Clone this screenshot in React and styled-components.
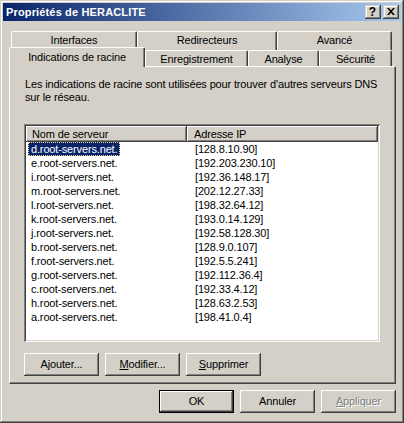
import React from 'react';
import styled, { createGlobalStyle, css } from 'styled-components';

const face = '#D4D0C8';
const shadow = '#808080';
const dark = '#404040';

const Global = createGlobalStyle`
  html, body { margin: 0; padding: 0; background: ${face}; }
  body {
    font-family: "Liberation Sans", Arial, sans-serif;
    font-size: 11px;
    letter-spacing: -0.15px;
    color: #000;
  }
  * { box-sizing: border-box; }
`;

const Window = styled.div`
  width: 404px;
  height: 423px;
  background: ${face};
  padding: 3px;
  display: flex;
  flex-direction: column;
  box-shadow: inset -1px -1px ${dark}, inset 1px 1px ${face},
    inset -2px -2px ${shadow}, inset 2px 2px #fff;
`;

const TitleBar = styled.div`
  height: 18px;
  flex: none;
  display: flex;
  align-items: center;
  padding: 0 2px 0 3px;
  background: linear-gradient(to right, #0a246a, #a6caf0);
`;

const Title = styled.div`
  color: #fff;
  font-weight: bold;
  font-size: 11px;
  letter-spacing: 0.15px;
  line-height: 13px;
`;

const CaptionButtons = styled.div`
  margin-left: auto;
  display: flex;
  gap: 2px;
`;

const CaptionButton = styled.div`
  width: 16px;
  height: 14px;
  background: ${face};
  display: flex;
  align-items: center;
  justify-content: center;
  box-shadow: inset -1px -1px ${dark}, inset 1px 1px ${face},
    inset -2px -2px ${shadow}, inset 2px 2px #fff;
  font-weight: bold;
  font-size: 12px;
  letter-spacing: 0;
  line-height: 12px;
  padding: 0 1px 1px 0;
`;

const Content = styled.div`
  flex: 1;
  display: flex;
  flex-direction: column;
  padding: 10px 5px 7px 6px;
`;

const TabStrip = styled.div`
  display: flex;
  flex-direction: column;
  flex: none;
`;

const TabRow = styled.div`
  display: flex;
  height: ${(p) => p.$h}px;
  padding-left: 2px;
`;

const Tab = styled.div`
  width: ${(p) => p.$w}px;
  height: 100%;
  flex: none;
  background: ${face};
  border-left: 1px solid #fff;
  border-top: 1px solid #fff;
  border-right: 1px solid ${dark};
  border-radius: 2px 2px 0 0;
  box-shadow: inset -1px 0 ${shadow};
  display: flex;
  justify-content: center;
  align-items: flex-start;
  padding-top: 2px;
  line-height: 13px;
  white-space: nowrap;
  ${(p) =>
    p.$selected &&
    css`
      position: relative;
      z-index: 1;
      width: ${p.$w + 2}px;
      margin-left: -2px;
      margin-top: -3px;
      height: calc(100% + 4px);
      padding-top: 3px;
    `}
`;

const Panel = styled.div`
  flex: 1;
  display: flex;
  flex-direction: column;
  align-items: flex-start;
  background: ${face};
  border-top: 1px solid #fff;
  border-left: 1px solid #fff;
  border-right: 1px solid ${dark};
  border-bottom: 1px solid ${dark};
  box-shadow: inset -1px -1px ${shadow};
  padding: 11px 14px 0 14px;
`;

const Description = styled.p`
  margin: 0;
  padding-left: 1px;
  line-height: 13px;
  width: 362px;
`;

const ListBox = styled.div`
  margin-top: 20px;
  width: 356px;
  height: 218px;
  background: #fff;
  padding: 2px;
  display: flex;
  flex-direction: column;
  box-shadow: inset 1px 1px ${shadow}, inset -1px -1px #fff,
    inset 2px 2px ${dark}, inset -2px -2px ${face};
  overflow: hidden;
`;

const Header = styled.div`
  display: flex;
  height: 16px;
  flex: none;
`;

const HeaderCell = styled.div`
  ${(p) => (p.$w ? `width: ${p.$w}px; flex: none;` : 'flex: 1;')}
  height: 100%;
  background: ${face};
  display: flex;
  align-items: center;
  padding-left: ${(p) => p.$pl}px;
  line-height: 13px;
  box-shadow: inset -1px -1px ${dark}, inset 1px 1px #fff,
    inset -2px -2px ${shadow};
`;

const Row = styled.div`
  display: flex;
  height: 14px;
  line-height: 14px;
  flex: none;
`;

const Cell = styled.div`
  ${(p) => (p.$w ? `width: ${p.$w}px; flex: none;` : 'flex: 1;')}
  padding-left: ${(p) => p.$pl}px;
  white-space: nowrap;
`;

const Label = styled.span`
  display: inline-block;
  height: 14px;
  padding: 0 3px 0 3px;
  ${(p) =>
    p.$selected &&
    css`
      background: #0a246a;
      color: #fff;
      outline: 1px dotted #f5db95;
      outline-offset: -1px;
    `}
`;

const ButtonRow = styled.div`
  display: flex;
  gap: 6px;
  margin-top: ${(p) => p.$mt}px;
  flex: none;
  ${(p) => p.$end && 'justify-content: flex-end; align-self: stretch;'}
`;

const Button = styled.button`
  width: 75px;
  height: 23px;
  margin: 0;
  padding: 0;
  border: none;
  border-radius: 0;
  background: ${face};
  font-family: "Liberation Sans", Arial, sans-serif;
  font-size: 11px;
  letter-spacing: -0.15px;
  line-height: 13px;
  color: #000;
  box-shadow: inset -1px -1px ${dark}, inset 1px 1px #fff,
    inset -2px -2px ${shadow}, inset 2px 2px ${face};
  ${(p) =>
    p.$default &&
    css`
      box-shadow: inset 0 0 0 1px #000, inset -2px -2px ${dark},
        inset 2px 2px #fff, inset -3px -3px ${shadow};
    `}
  ${(p) =>
    p.disabled &&
    css`
      color: ${shadow};
      text-shadow: 1px 1px #fff;
    `}
`;

const servers = [
  ['d.root-servers.net.', '[128.8.10.90]'],
  ['e.root-servers.net.', '[192.203.230.10]'],
  ['i.root-servers.net.', '[192.36.148.17]'],
  ['m.root-servers.net.', '[202.12.27.33]'],
  ['l.root-servers.net.', '[198.32.64.12]'],
  ['k.root-servers.net.', '[193.0.14.129]'],
  ['j.root-servers.net.', '[192.58.128.30]'],
  ['b.root-servers.net.', '[128.9.0.107]'],
  ['f.root-servers.net.', '[192.5.5.241]'],
  ['g.root-servers.net.', '[192.112.36.4]'],
  ['c.root-servers.net.', '[192.33.4.12]'],
  ['h.root-servers.net.', '[128.63.2.53]'],
  ['a.root-servers.net.', '[198.41.0.4]'],
];

const backTabs = [
  ['Interfaces', 126],
  ['Redirecteurs', 140],
  ['Avancé', 115],
];
const frontTabs = [
  ['Indications de racine', 134, true],
  ['Enregistrement', 103],
  ['Analyse', 71],
  ['Sécurité', 73],
];

export default function App() {
  return (
    <>
      <Global />
      <Window>
        <TitleBar>
          <Title>Propriétés de HERACLITE</Title>
          <CaptionButtons>
            <CaptionButton>?</CaptionButton>
            <CaptionButton>
              <svg width="8" height="7" viewBox="0 0 8 7">
                <path d="M0 0h2l2 2.3L6 0h2L5 3.5 8 7H6L4 4.7 2 7H0l3-3.5z" fill="#000" />
              </svg>
            </CaptionButton>
          </CaptionButtons>
        </TitleBar>
        <Content>
          <TabStrip>
            <TabRow $h={19}>
              {backTabs.map(([t, w]) => (
                <Tab key={t} $w={w}>{t}</Tab>
              ))}
            </TabRow>
            <TabRow $h={16}>
              {frontTabs.map(([t, w, s]) => (
                <Tab key={t} $w={w} $selected={s}>{t}</Tab>
              ))}
            </TabRow>
          </TabStrip>
          <Panel>
            <Description>
              Les indications de racine sont utilisées pour trouver d'autres serveurs DNS sur le réseau.
            </Description>
            <ListBox>
              <Header>
                <HeaderCell $w={161} $pl={6}>Nom de serveur</HeaderCell>
                <HeaderCell $pl={7}>Adresse IP</HeaderCell>
              </Header>
              {servers.map(([name, ip], i) => (
                <Row key={name}>
                  <Cell $w={161} $pl={2}>
                    <Label $selected={i === 0}>{name}</Label>
                  </Cell>
                  <Cell $pl={8}>{ip}</Cell>
                </Row>
              ))}
            </ListBox>
            <ButtonRow $mt={11}>
              <Button>A<u>j</u>outer...</Button>
              <Button><u>M</u>odifier...</Button>
              <Button><u>S</u>upprimer</Button>
            </ButtonRow>
          </Panel>
          <ButtonRow $mt={6} $end>
            <Button $default>OK</Button>
            <Button>Annuler</Button>
            <Button disabled><u>A</u>ppliquer</Button>
          </ButtonRow>
        </Content>
      </Window>
    </>
  );
}
